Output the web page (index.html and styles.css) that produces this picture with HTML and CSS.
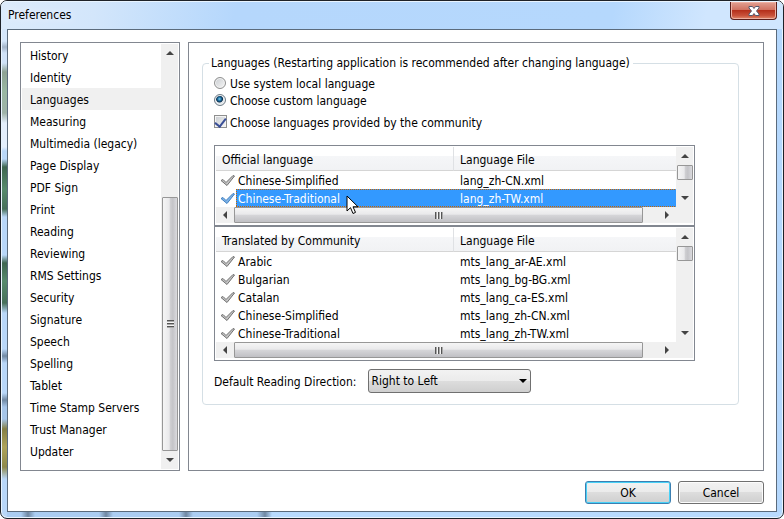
FILE: index.html
```
<!DOCTYPE html>
<html lang="en">
<head>
  <meta charset="utf-8">
  <title>Preferences</title>
  <link rel="stylesheet" href="styles.css">
</head>
<body>

<svg class="defs" width="0" height="0">
  <symbol id="check" viewBox="0 0 15 14">
    <path d="M1 7.500l2-1 3 3L13 2.500l1.500.500L7 12.500z" fill="var(--inner)" stroke="currentColor" stroke-linejoin="round"/>
  </symbol>
</svg>

<div class="window">
  <header class="titlebar">
    <h1>Preferences</h1>
    <button class="close" aria-label="Close">
      <svg width="12" height="10" viewBox="0 0 12 10">
        <path d="M1 .500h3.500L6 2.500l1.500-2H11V2L8.500 5 11 8v1.500H7.500L6 7.500l-1.500 2H1V8l2.500-3L1 2z" fill="#fff" stroke="#54576b"/>
      </svg>
    </button>
  </header>

  <main class="client">
    <div class="panes">
      <nav class="sidebar">
        <ul>
          <li><a href="#">History</a></li>
          <li><a href="#">Identity</a></li>
          <li class="active"><a href="#">Languages</a></li>
          <li><a href="#">Measuring</a></li>
          <li><a href="#">Multimedia (legacy)</a></li>
          <li><a href="#">Page Display</a></li>
          <li><a href="#">PDF Sign</a></li>
          <li><a href="#">Print</a></li>
          <li><a href="#">Reading</a></li>
          <li><a href="#">Reviewing</a></li>
          <li><a href="#">RMS Settings</a></li>
          <li><a href="#">Security</a></li>
          <li><a href="#">Signature</a></li>
          <li><a href="#">Speech</a></li>
          <li><a href="#">Spelling</a></li>
          <li><a href="#">Tablet</a></li>
          <li><a href="#">Time Stamp Servers</a></li>
          <li><a href="#">Trust Manager</a></li>
          <li><a href="#">Updater</a></li>
        </ul>
        <div class="vscroll">
          <span class="arrow up"></span>
          <span class="track"></span>
          <span class="thumb long"><i class="grip"></i></span>
          <span class="arrow down"></span>
        </div>
      </nav>

      <section class="panel">
        <fieldset>
          <legend>Languages (Restarting application is recommended after changing language)</legend>
          <div class="option"><input type="radio" name="lang" id="system"><label for="system">Use system local language</label></div>
          <div class="option"><input type="radio" name="lang" id="custom" checked><label for="custom">Choose custom language</label></div>
          <div class="option community"><input type="checkbox" id="community" checked><label for="community">Choose languages provided by the community</label></div>

          <div class="list">
            <table>
              <colgroup><col class="c-icon"><col class="c-name"><col></colgroup>
              <thead>
                <tr><th colspan="2">Official language</th><th>Language File</th></tr>
              </thead>
              <tbody>
                <tr><td><svg class="check"><use href="#check"/></svg></td><td>Chinese-Simplified</td><td>lang_zh-CN.xml</td></tr>
                <tr class="selected">
                  <td><svg class="check"><use href="#check"/></svg></td>
                  <td>Chinese-Traditional
                    <svg class="cursor" width="13" height="20" viewBox="0 0 13 20">
                      <path d="M1 1v15l3.500-3.300 2.500 5.800 2.500-1.100-2.500-5.600h5z" fill="#fff" stroke="#000"/>
                    </svg>
                  </td>
                  <td>lang_zh-TW.xml</td>
                </tr>
              </tbody>
            </table>
            <div class="vscroll">
              <span class="arrow up"></span>
              <span class="thumb"></span>
              <span class="track"></span>
              <span class="arrow down"></span>
            </div>
            <div class="hscroll">
              <span class="arrow left"></span>
              <span class="thumb"><i class="grip"></i></span>
              <span class="track"></span>
              <span class="arrow right"></span>
            </div>
            <div class="corner"></div>
          </div>

          <div class="list">
            <table>
              <colgroup><col class="c-icon"><col class="c-name"><col></colgroup>
              <thead>
                <tr><th colspan="2">Translated by Community</th><th>Language File</th></tr>
              </thead>
              <tbody>
                <tr><td><svg class="check"><use href="#check"/></svg></td><td>Arabic</td><td>mts_lang_ar-AE.xml</td></tr>
                <tr><td><svg class="check"><use href="#check"/></svg></td><td>Bulgarian</td><td>mts_lang_bg-BG.xml</td></tr>
                <tr><td><svg class="check"><use href="#check"/></svg></td><td>Catalan</td><td>mts_lang_ca-ES.xml</td></tr>
                <tr><td><svg class="check"><use href="#check"/></svg></td><td>Chinese-Simplified</td><td>mts_lang_zh-CN.xml</td></tr>
                <tr><td><svg class="check"><use href="#check"/></svg></td><td>Chinese-Traditional</td><td>mts_lang_zh-TW.xml</td></tr>
              </tbody>
            </table>
            <div class="vscroll">
              <span class="arrow up"></span>
              <span class="thumb"></span>
              <span class="track"></span>
              <span class="arrow down"></span>
            </div>
            <div class="hscroll">
              <span class="arrow left"></span>
              <span class="thumb"><i class="grip"></i></span>
              <span class="track"></span>
              <span class="arrow right"></span>
            </div>
            <div class="corner"></div>
          </div>

          <div class="direction">
            <label for="direction">Default Reading Direction:</label>
            <div class="select">
              <select id="direction">
                <option>Right to Left</option>
                <option>Left to Right</option>
              </select>
            </div>
          </div>
        </fieldset>
      </section>
    </div>

    <footer>
      <button class="btn default">OK</button>
      <button class="btn">Cancel</button>
    </footer>
  </main>
</div>

</body>
</html>
```

FILE: styles.css
```
* {
  box-sizing: border-box;
}
body {
  margin: 0;
  background: #fff;
  color: #000;
  font: 12px/18px "DejaVu Sans Condensed", Tahoma, "DejaVu Sans", sans-serif;
}
.defs {
  position: absolute;
}

/* window frame */
.window {
  display: flex;
  flex-direction: column;
  min-height: 100vh;
  padding: 0 6px 6px;
  border: 1px solid #1e2228;
  border-radius: 7px;
  box-shadow: inset 0 0 0 1px #e8f4ff;
  background:
    linear-gradient(#d5e7fb 40px, #a3b4c8 46px, #d0e2f7 52px, #d0e2f7 62px, #8fa394 71px, #9ab8a2 90px, #9fb3a8 112px, #e3eefb 122px, #e3eefb 146px, #b9d7f8 150px, #b9d7f8 158px, #3f6650 166px, #578a6c 188px, #47705a 208px, #b9d7f8 216px, #b9d7f8 254px, #3f6650 262px, #578a6c 280px, #47705a 302px, #b9d7f8 312px, #b9d7f8 348px, #7189a3 355px, #b9d7f8 362px, #b9d7f8 392px, #7189a3 399px, #a6c5e8 406px, #a6c5e8 418px, #857f45 428px, #aea35a 446px, #8f8a4c 466px, #b9d7f8 478px) left top / 6px 100% no-repeat,
    linear-gradient(90deg, #abcdf2 20px, #6f87a2 27px, #abcdf2 34px, #abcdf2 98px, #6f87a2 105px, #abcdf2 112px, #abcdf2 178px, #6f87a2 185px, #abcdf2 192px, #abcdf2 256px, #6f87a2 264px, #b9dbfe 271px) left bottom / 100% 6px no-repeat,
    linear-gradient(90deg, #cfe5fd, #b9dbfe 30%, #b5d8fd);
}
.titlebar {
  display: flex;
  justify-content: space-between;
  align-items: flex-start;
  height: 28px;
  margin: 0 -6px;
  padding: 0 6px 0 7px;
  border-radius: 6px 6px 0 0;
  border-top: 1px solid #e8f4ff;
  background: linear-gradient(100deg, #dcebfb, #d3e6fb 12%, #b5d7fc 30%, #b5d8fd 78%, #d0e6fe 90%);
}
.titlebar h1 {
  margin: 4px 0 0;
  font-size: 12px;
  font-weight: normal;
  text-shadow: 0 0 8px #fff;
}
.close {
  display: flex;
  align-items: center;
  justify-content: center;
  width: 47px;
  height: 18px;
  padding: 0;
  border: 1px solid #5b1f1c;
  border-top: 0;
  border-radius: 0 0 4px 4px;
  box-shadow: inset 0 0 0 1px #eeb0a2;
  background: linear-gradient(#e2a193, #d0705f 48%, #b5301c 50%, #c9523b 80%, #e08a6c);
}
.client {
  display: flex;
  flex: 1;
  flex-direction: column;
  padding: 12px;
  padding-bottom: 7px;
  border: 1px solid #5b6b7c;
  background: #fff;
}
.panes {
  display: flex;
  flex: 1;
  gap: 8px;
}
.sidebar, .panel {
  border: 1px solid #828790;
}

/* category list */
.sidebar {
  display: flex;
  flex: 0 0 160px;
  padding: 1px;
}
.sidebar ul {
  flex: 1;
  margin: 0;
  padding: 0;
  list-style: none;
}
.sidebar a {
  display: block;
  padding: 2px 8px 0;
  color: #000;
  line-height: 20px;
  text-decoration: none;
  white-space: nowrap;
}
.sidebar .active {
  background: #f0f0f0;
}

/* language settings */
.panel {
  flex: 1;
  padding: 11px 24px 0 13px;
}
fieldset {
  min-width: 0;
  margin: 0;
  padding: 2px 43px 11px 11px;
  border: 1px solid #d5dfe5;
  border-radius: 4px;
}
legend {
  margin-left: -5px;
  padding: 0 3px 0 2px;
  white-space: nowrap;
}
.option {
  display: flex;
  align-items: center;
  gap: 4px;
  height: 17px;
}
.option label {
  padding-top: 2px;
}
.option input {
  appearance: none;
  width: 12px;
  height: 12px;
  margin: 0;
  border: 1px solid #8e8f8f;
  background: linear-gradient(135deg, #c8ccd0, #f6f6f6);
  box-shadow: inset 0 0 0 1px #f4f4f4;
}
.option input[type=radio] {
  border-radius: 50%;
}
.option input[type=radio]:checked {
  border-color: #6d7b86;
  background: radial-gradient(circle at 45% 40%, #7fd0f2 0, #1c6ea0 22%, #0b2f4e 38%, #dfe5ea 48%);
}
.option input[type=checkbox] {
  display: grid;
  place-items: center;
  width: 13px;
  height: 13px;
}
.option input[type=checkbox]:checked::after {
  content: "";
  width: 5px;
  height: 9px;
  border: solid #3a4f97;
  border-width: 0 2px 2px 0;
  transform: rotate(38deg);
}
.community {
  gap: 3px;
  margin: 5px 0 15px;
}
.list {
  display: grid;
  grid-template-columns: 1fr 17px;
  padding: 1px 1px 2px;
  border: 1px solid #828790;
}
table {
  width: 100%;
  table-layout: fixed;
  border-collapse: separate;
  border-spacing: 0;
}
.c-icon {
  width: 20px;
}
.c-name {
  width: 218px;
}
th {
  height: 24px;
  padding: 2px 6px 0;
  border-bottom: 1px solid #d5d5d5;
  background: linear-gradient(#fff 40%, #f5f6f8 41%, #f1f2f4);
  font-weight: normal;
  text-align: left;
}
th:first-child {
  border-right: 1px solid #dfe1e4;
}
td {
  height: 18px;
  padding: 2px 6px 0;
  line-height: 16px;
  white-space: nowrap;
}
td:first-child {
  padding: 0 0 0 4px;
}
td:nth-child(2) {
  position: relative;
  padding: 2px 2px 0;
}
.check {
  display: block;
  width: 15px;
  height: 14px;
  color: #707070;
  --inner: #c4c4c4;
}
.selected .check {
  color: #3f7fc0;
  --inner: #7fb4e8;
}
/* dotted focus line round the selected row */
.selected td + td {
  --dots: linear-gradient(90deg, #c86400 50%, #39f 50%);
  background:
    var(--dots) left top / 2px 1px repeat-x,
    var(--dots) left bottom / 2px 1px repeat-x,
    #39f;
  color: #fff;
}
.selected td:nth-child(2) {
  background:
    var(--dots) left top / 2px 1px repeat-x,
    var(--dots) left bottom / 2px 1px repeat-x,
    linear-gradient(#c86400 50%, #39f 50%) left top / 1px 2px repeat-y,
    #39f;
}
.cursor {
  position: absolute;
  z-index: 1;
  top: 6px;
  left: 110px;
}

/* scrollbars */
.vscroll, .hscroll {
  display: flex;
  background: #f0f0f0;
}
.vscroll {
  flex-direction: column;
  width: 17px;
  padding-left: 1px;
}
.hscroll {
  height: 16px;
}
.corner {
  background: #f0f0f0;
}
.track {
  flex: 1;
}
.arrow {
  display: flex;
  flex: 0 0 18px;
  align-items: center;
  justify-content: center;
}
.arrow::before {
  content: "";
  border: 4px solid transparent;
}
.up::before {
  border-top: 0;
  border-bottom-color: #444;
}
.down::before {
  border-bottom: 0;
  border-top-color: #444;
}
.left::before {
  border-left: 0;
  border-right-color: #444;
}
.right::before {
  border-right: 0;
  border-left-color: #444;
}
.thumb {
  display: flex;
  align-items: center;
  justify-content: center;
  border: 1px solid #979797;
  border-radius: 1px;
}
.vscroll .thumb {
  flex: 0 0 15px;
  background: linear-gradient(90deg, #f5f5f5, #e9e9eb 45%, #d0d0d3 50%, #c4c4c8 70%, #dadade);
}
.vscroll .long {
  flex: 0 0 254px;
}
.hscroll .thumb {
  flex: 0 0 89%;
  background: linear-gradient(#f5f5f5, #e9e9eb 45%, #d6d6d9 50%, #c0c0c4);
}
.grip {
  width: 8px;
  height: 7px;
  background: repeating-linear-gradient(90deg, #555 0 1px, #aaa 1px 2px, #f5f5f5 2px 3px);
}
.vscroll .grip {
  width: 7px;
  height: 8px;
  background: repeating-linear-gradient(#555 0 1px, #aaa 1px 2px, #f5f5f5 2px 3px);
}

/* reading direction */
.direction {
  display: flex;
  align-items: center;
  gap: 12px;
  margin-top: 8px;
}
.direction > label {
  padding-top: 2px;
}
.select {
  display: grid;
  align-items: center;
  width: 163px;
}
.select::after {
  content: "";
  grid-area: 1 / 1;
  justify-self: end;
  margin-right: 4px;
  border: 4px solid transparent;
  border-bottom: 0;
  border-top-color: #000;
  pointer-events: none;
}
select {
  appearance: none;
  grid-area: 1 / 1;
  height: 24px;
  padding: 0 2px;
  border: 1px solid #707070;
  border-radius: 3px;
  background: linear-gradient(#f2f2f2, #ebebeb 49%, #dddddd 50%, #cfcfcf);
  font: inherit;
  color: #000;
}

/* buttons */
footer {
  display: flex;
  justify-content: flex-end;
  gap: 7px;
  padding-top: 10px;
}
.btn {
  width: 86px;
  height: 23px;
  padding: 0;
  border: 1px solid #707070;
  border-radius: 3px;
  box-shadow: inset 0 0 0 1px #fcfcfc;
  background: linear-gradient(#f2f2f2, #ebebeb 49%, #dddddd 50%, #cfcfcf);
  color: #000;
  font: inherit;
}
.default {
  border-color: #3c7fb1;
  box-shadow: inset 0 0 0 1px #48d1f7;
}
```
